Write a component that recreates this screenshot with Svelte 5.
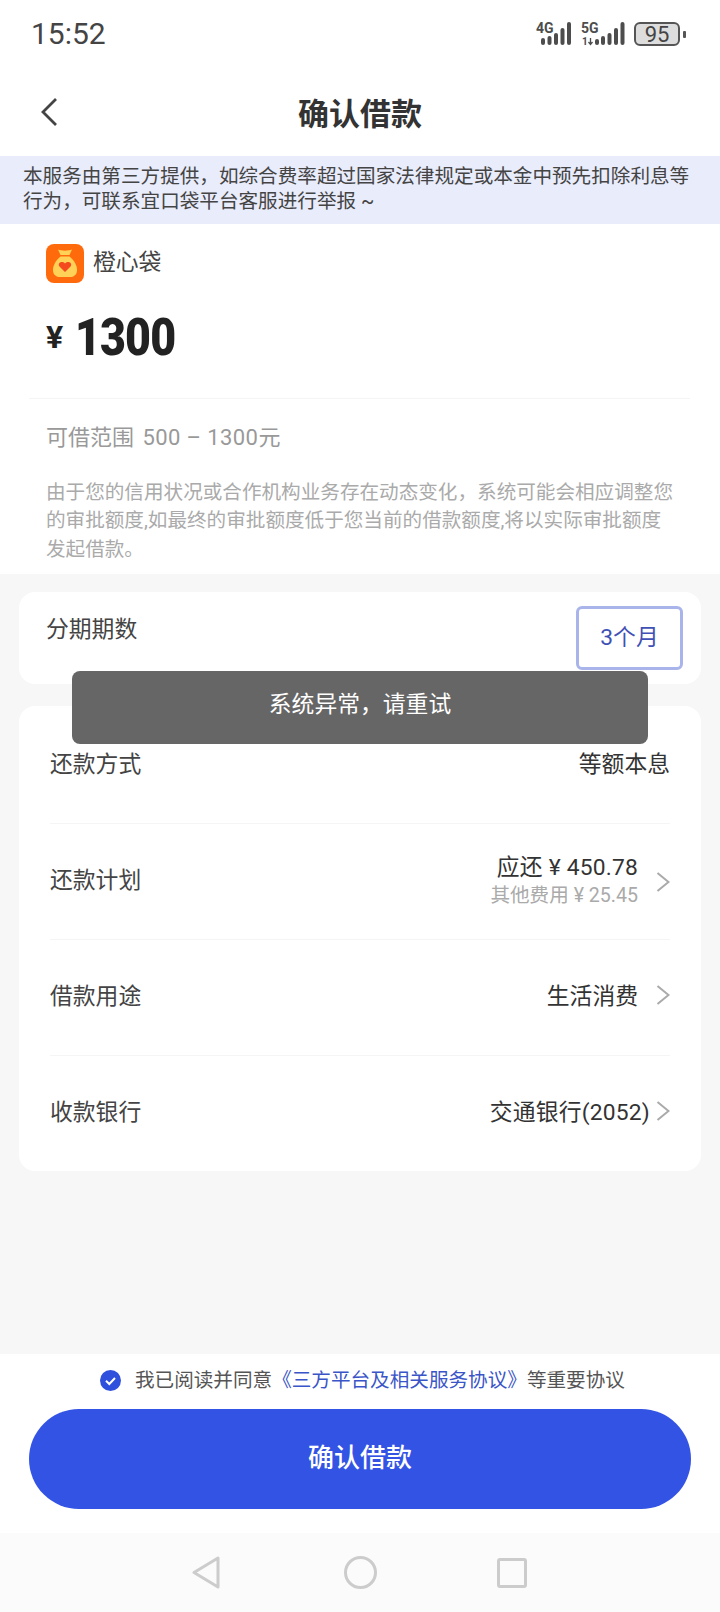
<script lang="ts">
  const notice =
    '本服务由第三方提供，如综合费率超过国家法律规定或本金中预先扣除利息等行为，可联系宜口袋平台客服进行举报 ~';
  const desc =
    '由于您的信用状况或合作机构业务存在动态变化，系统可能会相应调整您的审批额度,如最终的审批额度低于您当前的借款额度,将以实际审批额度发起借款。';
</script>

<div class="page">
  <div class="status">
    <span class="time">15:52</span>
    <div class="status-right">
      <svg width="37" height="26" viewBox="0 0 37 26" class="sig">
        <text x="0" y="12" class="net">4G</text>
        <rect x="5" y="17" width="4" height="7" rx="2" />
        <rect x="11.5" y="15" width="4" height="9" rx="2" />
        <rect x="18" y="12" width="4" height="12" rx="2" />
        <rect x="24.5" y="7" width="4" height="17" rx="2" />
        <rect x="31" y="1" width="4" height="23" rx="2" />
      </svg>
      <svg width="46" height="26" viewBox="0 0 46 26" class="sig">
        <text x="0" y="12" class="net">5G</text>
        <text x="1" y="24" class="net small">1</text>
        <path d="M9.500 17 V23.500 M7.500 21 L9.500 23.500 L11.500 21" fill="none" stroke="#4d4d4d" stroke-width="1.300" />
        <rect x="14" y="18" width="4" height="6" rx="2" />
        <rect x="20" y="15" width="4" height="9" rx="2" />
        <rect x="26.5" y="12" width="4" height="12" rx="2" />
        <rect x="33" y="7" width="4" height="17" rx="2" />
        <rect x="39.5" y="1" width="4" height="23" rx="2" />
      </svg>
      <div class="battery"><span>95</span></div>
      <span class="nub"></span>
    </div>
  </div>

  <header class="top">
    <svg class="back" width="18" height="30" viewBox="0 0 18 30">
      <path d="M16 2 L3 15 L16 28" fill="none" stroke="#444" stroke-width="2.8" />
    </svg>
    <h1>确认借款</h1>
    <span></span>
  </header>

  <div class="notice">{notice}</div>

  <section class="summary">
    <div class="brand">
      <svg width="38" height="39" viewBox="0 0 38 39">
        <rect width="38" height="39" rx="8" fill="#ff6a0c" />
        <path d="M12 5.5 C15 7 23 7 26 5.5 L23.5 11 H14.5 Z" fill="#ffd257" />
        <path d="M14.5 12.5 H23.5 C28 16 31.5 22 31 27 C30.5 31 27.5 33 24 33 H14 C10.500 33 7.500 31 7 27 C6.500 22 10 16 14.500 12.500 Z" fill="#ffd257" />
        <path d="M19 28 L13.500 22.500 C11 19.500 15.500 16 19 19.500 C22.500 16 27 19.500 24.500 22.500 Z" fill="#f4491f" />
      </svg>
      <span class="brand-name">橙心袋</span>
    </div>
    <div class="amount">
      <span class="yen">¥</span>
      <span class="num">1300</span>
    </div>
    <div class="line"></div>
    <p class="range">可借范围 <span class="range-num">500 – 1300</span>元</p>
    <p class="desc">{desc}</p>
  </section>

  <main class="body">
    <div class="card term">
      <span class="term-label">分期期数</span>
      <div class="term-btn"><span>3个月</span></div>
    </div>

    <div class="card list">
      <div class="row">
        <span>还款方式</span>
        <span class="val">等额本息</span>
      </div>
      <div class="row">
        <span>还款计划</span>
        <div class="val-wrap">
          <div class="stack">
            <span class="val wide">应还 ¥ 450.78</span>
            <span class="sub">其他费用 ¥ 25.45</span>
          </div>
          <svg class="chev low" width="14" height="20" viewBox="0 0 14 20"><path d="M1.500 1 L12.500 10 L1.500 19" /></svg>
        </div>
      </div>
      <div class="row">
        <span>借款用途</span>
        <div class="val-wrap">
          <span class="val">生活消费</span>
          <svg class="chev" width="14" height="20" viewBox="0 0 14 20"><path d="M1.500 1 L12.500 10 L1.500 19" /></svg>
        </div>
      </div>
      <div class="row">
        <span>收款银行</span>
        <div class="val-wrap tight">
          <span class="val wide">交通银行(2052)</span>
          <svg class="chev" width="14" height="20" viewBox="0 0 14 20"><path d="M1.500 1 L12.500 10 L1.500 19" /></svg>
        </div>
      </div>
    </div>
  </main>

  <footer class="foot">
    <div class="agree">
      <svg width="21" height="21" viewBox="0 0 21 21">
        <circle cx="10.500" cy="10.500" r="10.500" fill="#2f50dc" />
        <path d="M6 10.800 L9.300 14 L15 8" fill="none" stroke="#fff" stroke-width="2" />
      </svg>
      <span class="agree-text">我已阅读并同意<a href="#agreement">《三方平台及相关服务协议》</a>等重要协议</span>
    </div>
    <button class="submit"><span>确认借款</span></button>
  </footer>

  <nav class="navbar">
    <svg width="28" height="33" viewBox="0 0 28 33">
      <path d="M26 2 V31 L2 16.500 Z" fill="none" stroke="#ccc" stroke-width="3" stroke-linejoin="round" />
    </svg>
    <svg width="33" height="33" viewBox="0 0 33 33">
      <circle cx="16.500" cy="16.500" r="15" fill="none" stroke="#ccc" stroke-width="3" />
    </svg>
    <svg width="30" height="30" viewBox="0 0 30 30">
      <rect x="1.500" y="1.500" width="27" height="27" rx="1.500" fill="none" stroke="#ccc" stroke-width="3" />
    </svg>
  </nav>

  <div class="toast"><span>系统异常，请重试</span></div>
</div>

<style>
  :global(body) {
    margin: 0;
  }

  .page {
    position: relative;
    width: 720px;
    height: 1612px;
    display: flex;
    flex-direction: column;
    background: #fff;
    font-family: Roboto, 'Noto Sans CJK SC', sans-serif;
    color: #444;
    overflow: hidden;
  }

  .status {
    height: 68px;
    flex-shrink: 0;
    box-sizing: border-box;
    display: flex;
    justify-content: space-between;
    align-items: center;
    padding: 0 0 0 31px;
  }

  .time {
    font-size: 30px;
    color: #444;
    padding-bottom: 2px;
  }

  .status-right {
    display: flex;
    align-items: center;
    margin-right: 34px;
  }

  .sig {
    margin-right: 8px;
    fill: #4d4d4d;
  }

  .net {
    font-size: 14px;
    font-weight: 700;
    font-family: Roboto, sans-serif;
  }

  .net.small {
    font-size: 10px;
  }

  .battery {
    width: 42px;
    height: 20px;
    margin-left: -1px;
    border: 2px solid #555;
    border-radius: 6px;
    background: #ddd;
    display: flex;
    align-items: center;
    justify-content: center;
    font-size: 22px;
    color: #444;
  }

  .nub {
    width: 3px;
    height: 7px;
    margin-left: 3px;
    background: #555;
    border-radius: 1px;
  }

  .top {
    height: 88px;
    flex-shrink: 0;
    display: grid;
    grid-template-columns: 1fr auto 1fr;
    align-items: center;
  }

  .back {
    margin-left: 40px;
  }

  h1 {
    margin: 0;
    font-size: 31px;
    font-weight: 700;
    color: #333;
    padding-bottom: 2px;
  }

  .notice {
    height: 68px;
    flex-shrink: 0;
    box-sizing: border-box;
    padding: 9px 23px 0 23px;
    background: #e9ecfb;
    font-size: 19.6px;
    line-height: 24.6px;
    color: #444;
  }

  .summary {
    height: 350px;
    flex-shrink: 0;
    box-sizing: border-box;
    padding-top: 20px;
  }

  .brand {
    display: flex;
    align-items: center;
    gap: 9px;
    margin-left: 46px;
    height: 39px;
    font-size: 22.8px;
    color: #444;
  }

  .brand-name {
    padding-bottom: 6px;
  }

  .amount {
    display: flex;
    align-items: center;
    height: 60px;
    margin: 24px 0 31px 46px;
  }

  .yen {
    font-size: 32px;
    font-weight: 700;
    color: #222;
    width: 29px;
  }

  .num {
    font-size: 52px;
    font-weight: 900;
    color: #222;
    letter-spacing: -1px;
    transform: scaleX(0.86);
    transform-origin: left center;
  }

  .line {
    height: 1px;
    margin: 0 30px 0 29px;
    background: #f5f5f5;
  }

  .range {
    margin: 24px 0 0 46px;
    font-size: 22px;
    line-height: 30px;
    color: #999;
  }

  .range-num {
    letter-spacing: 0.4px;
    margin-left: 3px;
  }

  .desc {
    margin: 26px 46px 0 46px;
    font-size: 19.6px;
    line-height: 28.3px;
    color: #aaa;
  }

  .body {
    flex: 1;
    background: #f7f7f7;
    padding: 18px 19px 0;
    display: flex;
    flex-direction: column;
    gap: 22px;
  }

  .card {
    background: #fff;
    border-radius: 16px;
  }

  .term {
    height: 92px;
    box-sizing: border-box;
    padding: 14px 18px 0 27px;
    display: flex;
    justify-content: space-between;
    align-items: flex-start;
    font-size: 22.8px;
  }

  .term-label {
    line-height: 32px;
    margin-top: 8px;
  }

  .term-btn {
    width: 107px;
    height: 64px;
    box-sizing: border-box;
    border: 3px solid #a9b4ea;
    border-radius: 6px;
    display: flex;
    align-items: center;
    justify-content: center;
    color: #3f51b5;
    padding-bottom: 6px;
  }

  .list {
    padding: 1px 31px 0;
    font-size: 22.8px;
  }

  .row {
    height: 116px;
    box-sizing: border-box;
    display: flex;
    justify-content: space-between;
    align-items: center;
    border-top: 1px solid #f5f5f5;
    padding-bottom: 6px;
  }

  .row:first-child {
    border-top: none;
  }

  .val {
    color: #333;
  }

  .wide {
    letter-spacing: 0.2px;
  }

  .val-wrap {
    display: flex;
    align-items: center;
    gap: 18px;
  }

  .val-wrap.tight {
    gap: 6px;
  }

  .stack {
    display: flex;
    flex-direction: column;
    align-items: flex-end;
    line-height: 28px;
    padding-top: 6px;
  }

  .sub {
    font-size: 19.6px;
    color: #aaa;
  }

  .chev path {
    fill: none;
    stroke: #aaa;
    stroke-width: 2;
  }

  .chev.low {
    margin-top: 6px;
  }

  .foot {
    flex-shrink: 0;
    height: 179px;
  }

  .agree {
    height: 55px;
    display: flex;
    align-items: center;
    gap: 14px;
    padding: 0 0 3px 100px;
    box-sizing: border-box;
    font-size: 19.6px;
    color: #555;
  }

  .agree-text {
    padding-bottom: 4px;
  }

  .agree a {
    color: #3a55c8;
    text-decoration: none;
  }

  .submit {
    display: block;
    width: 662px;
    height: 100px;
    margin-left: 29px;
    padding: 0 0 8px;
    border: none;
    border-radius: 50px;
    background: #3353e4;
    color: #fff;
    font-family: inherit;
    font-size: 26px;
    font-weight: 500;
  }

  .navbar {
    height: 79px;
    flex-shrink: 0;
    background: #fbfbfb;
    display: flex;
    align-items: center;
    gap: 124px;
    box-sizing: border-box;
    padding-left: 192px;
  }

  .navbar svg:last-child {
    margin-left: -4px;
  }

  .toast {
    position: absolute;
    top: 671px;
    left: 72px;
    width: 576px;
    height: 73px;
    box-sizing: border-box;
    padding-bottom: 10px;
    border-radius: 8px;
    background: #666;
    color: #fff;
    font-size: 22.8px;
    display: flex;
    align-items: center;
    justify-content: center;
  }
</style>
